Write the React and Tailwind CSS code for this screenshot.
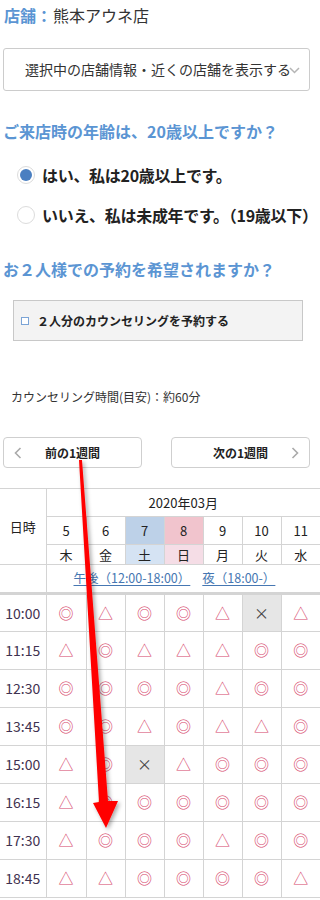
import React from "react";

const font = { fontFamily: '"Noto Sans CJK JP", "Noto Sans", sans-serif' };

const rows = [
  ["10:00", "◎△◎◎△×△"],
  ["11:15", "△◎△△△◎◎"],
  ["12:30", "◎◎◎◎△◎◎"],
  ["13:45", "◎◎△◎△△◎"],
  ["15:00", "△◎×△◎◎◎"],
  ["16:15", "△◎◎◎◎◎◎"],
  ["17:30", "△◎◎◎△◎◎"],
  ["18:45", "△△◎◎◎◎△"],
];

const days = [
  ["5", "木", "", ""],
  ["6", "金", "", ""],
  ["7", "土", "bg-[#bdd1e8]", "bg-[#d5e3f3]"],
  ["8", "日", "bg-[#f1c4cd]", "bg-[#f5dde6]"],
  ["9", "月", "", ""],
  ["10", "火", "", ""],
  ["11", "水", "", ""],
];

function Chevron({ dir }) {
  return (
    <svg width="8" height="12" viewBox="0 0 8 12" className="text-[#aaa]">
      {dir === "left" ? (
        <polyline points="6.5,1 1.5,6 6.5,11" fill="none" stroke="currentColor" strokeWidth="1.6" />
      ) : (
        <polyline points="1.5,1 6.5,6 1.5,11" fill="none" stroke="currentColor" strokeWidth="1.6" />
      )}
    </svg>
  );
}

function Radio({ checked, label }) {
  return (
    <div className="h-[40px] flex items-center pl-[17px]">
      <span className="shrink-0 w-[18px] h-[18px] rounded-full border border-[#dcdcdc] bg-white flex items-center justify-center">
        {checked && <span className="w-[12px] h-[12px] rounded-full bg-[#4a7fc1]" />}
      </span>
      <span className="ml-[7px] text-[16px] tracking-[-0.3px] font-bold text-[#222] whitespace-nowrap">{label}</span>
    </div>
  );
}

function Mark({ s }) {
  if (s === "×") return <span className="text-[15px] text-[#444]">×</span>;
  return <span className="text-[15px] text-[#d6456a]">{s}</span>;
}

export default function App() {
  return (
    <div className="relative w-[320px] h-[900px] overflow-hidden bg-white text-[#333]" style={font}>
      {/* store */}
      <div className="h-[30px] flex items-center pl-[4px] text-[16px] whitespace-nowrap">
        <span className="font-bold text-[#5b95d3]">店舗：</span>
        <span className="ml-[1px]">熊本アウネ店</span>
      </div>

      <div className="relative mt-[18px] ml-[3px] w-[307px] h-[43px] border border-[#ccc] rounded-[3px] flex items-center pl-[21px] text-[14px] whitespace-nowrap overflow-hidden">
        選択中の店舗情報・近くの店舗を表示する
        <svg width="11" height="7" viewBox="0 0 11 7" className="absolute right-[9px] top-[18px]">
          <polyline points="1,1 5.5,5.5 10,1" fill="none" stroke="#b5b5b5" strokeWidth="1.5" />
        </svg>
      </div>

      <div className="mt-[28px] h-[24px] flex items-center pl-[3px] text-[16px] font-bold text-[#5b95d3] whitespace-nowrap">
        ご来店時の年齢は、20歳以上ですか？
      </div>

      <div className="mt-[12px]">
        <Radio checked label="はい、私は20歳以上です。" />
        <Radio label="いいえ、私は未成年です。（19歳以下）" />
      </div>

      <div className="mt-[22px] h-[24px] flex items-center pl-[3px] text-[16px] font-bold text-[#5b95d3] whitespace-nowrap">
        お２人様での予約を希望されますか？
      </div>

      <div className="mt-[19px] ml-[13px] w-[290px] h-[41px] bg-[#f3f3f3] border border-[#c8c8c8] flex items-center pl-[7px]">
        <span className="w-[8px] h-[8px] border border-[#7ba4d6] bg-white" />
        <span className="ml-[8px] text-[12px] font-bold text-[#222]">２人分のカウンセリングを予約する</span>
      </div>

      <div className="mt-[46px] h-[20px] flex items-center pl-[11px] text-[12px] text-[#333] whitespace-nowrap">
        カウンセリング時間(目安)：約60分
      </div>

      <div className="mt-[30px] flex pl-[3px] gap-[29px]">
        <button className="relative w-[139px] h-[31px] border border-[#cfcfcf] rounded-[4px] bg-white text-[12px] font-bold text-[#222] flex items-center justify-center">
          <span className="absolute left-[10px] top-[9px]"><Chevron dir="left" /></span>
          前の1週間
        </button>
        <button className="relative w-[139px] h-[31px] border border-[#cfcfcf] rounded-[4px] bg-white text-[12px] font-bold text-[#222] flex items-center justify-center">
          次の1週間
          <span className="absolute right-[10px] top-[9px]"><Chevron dir="right" /></span>
        </button>
      </div>

      <table className="mt-[20px] w-[320px] table-fixed border-collapse text-[13px] text-[#222]">
        <colgroup>
          <col className="w-[46px]" />
          <col className="w-[40px]" />
          <col className="w-[39px]" />
          <col className="w-[39px]" />
          <col className="w-[39px]" />
          <col className="w-[39px]" />
          <col className="w-[39px]" />
          <col className="w-[39px]" />
        </colgroup>
        <tbody>
          <tr className="h-[28px]">
            <td rowSpan={3} className="border border-l-0 border-[#d4d4d4] text-center">日時</td>
            <td colSpan={7} className="border border-r-0 border-[#d4d4d4] text-center">2020年03月</td>
          </tr>
          <tr className="h-[28px]">
            {days.map(([d, , bg], i) => (
              <td key={i} className={`border border-[#d4d4d4] text-center ${i === 6 ? "border-r-0" : ""} ${bg}`}>{d}</td>
            ))}
          </tr>
          <tr className="h-[20px]">
            {days.map(([, w, , bg], i) => (
              <td key={i} className={`border border-[#d4d4d4] text-center leading-none ${i === 6 ? "border-r-0" : ""} ${bg}`}>{w}</td>
            ))}
          </tr>
          <tr className="h-[29px]">
            <td className="border border-l-0 border-b-[3px] border-[#d4d4d4]" />
            <td colSpan={7} className="border border-r-0 border-b-[3px] border-[#d4d4d4] text-left pl-[27px] whitespace-nowrap text-[12.5px]">
              <a className="text-[#4677b2] underline underline-offset-2">午後（12:00-18:00）</a>
              <a className="ml-[12px] text-[#4677b2] underline underline-offset-2">夜（18:00-）</a>
            </td>
          </tr>
          {rows.map(([t, marks]) => (
            <tr key={t} className="h-[38px]">
              <td className="border border-l-0 border-[#d4d4d4] text-center text-[14px] text-[#3f3250]">{t}</td>
              {[...marks].map((m, i) => (
                <td key={i} className={`border border-[#d4d4d4] text-center ${i === 6 ? "border-r-0" : ""} ${m === "×" ? "bg-[#e6e6e6]" : ""}`}>
                  <Mark s={m} />
                </td>
              ))}
            </tr>
          ))}
        </tbody>
      </table>

      {/* annotation arrow */}
      <svg className="absolute left-0 top-0 pointer-events-none" width="320" height="900" viewBox="0 0 320 900">
        <defs>
          <filter id="sh" x="-50%" y="-10%" width="200%" height="120%">
            <feDropShadow dx="2" dy="2" stdDeviation="2" floodColor="#000" floodOpacity="0.35" />
          </filter>
        </defs>
        <polygon
          points="79,460 82,460 108,801 118,801 106,828 93,803 99,802"
          fill="#ff0000"
          filter="url(#sh)"
        />
      </svg>
    </div>
  );
}
